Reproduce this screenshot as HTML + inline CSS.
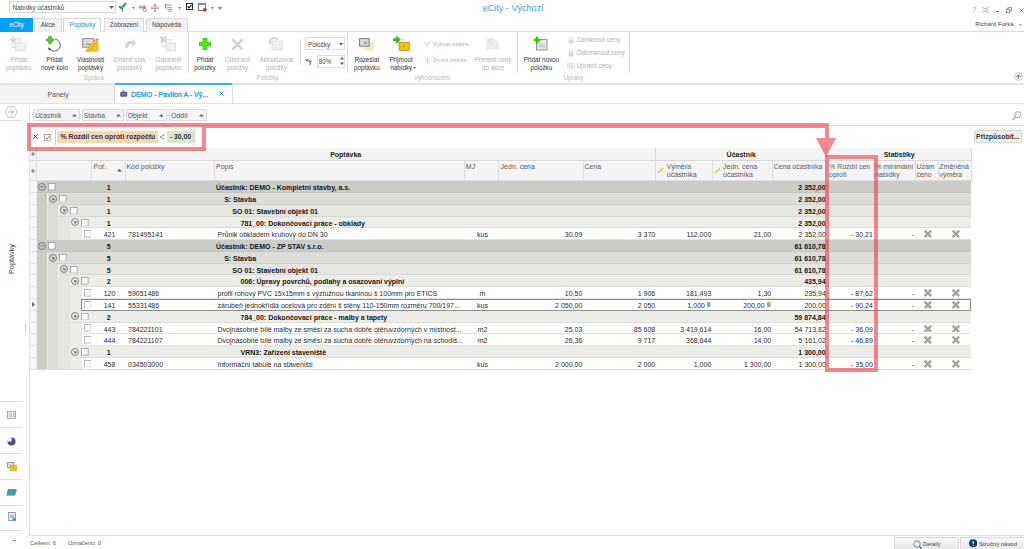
<!DOCTYPE html><html><head><meta charset="utf-8"><style>
html,body{margin:0;padding:0;width:1024px;height:549px;overflow:hidden;background:#fff;position:relative;font-family:"Liberation Sans",sans-serif}
body>div{position:absolute}
.t{position:absolute;white-space:nowrap;color:#333}
</style></head><body>
<div style="left:9.00px;top:1.20px;width:106.50px;height:12.30px;border:1px solid #d6d6d6;box-sizing:border-box;background:#fff"></div>
<div class="t" style="left:12.50px;top:4.04px;font-size:6.3px;line-height:7.56px;color:#444">Nabídky účastníků</div>
<svg style="position:absolute;left:109.00px;top:5.50px" width="5" height="3" viewBox="0 0 5 3"><path d="M0 0h5L2.5 3z" fill="#666"/></svg>
<svg style="position:absolute;left:117.50px;top:2.00px" width="9" height="10" viewBox="0 0 9 10"><path d="M4.5 4.5v5" stroke="#4a6a9a" stroke-width="1.2"/><path d="M1 4.2l2.4 2L8 1" stroke="#2faa2f" stroke-width="2" fill="none"/><path d="M1.5 4.5h6" stroke="#6c8cb8" stroke-width="0.8"/></svg>
<svg style="position:absolute;left:131.50px;top:6.50px" width="3" height="2" viewBox="0 0 3 2"><path d="M0 0h3L1.5 2z" fill="#777"/></svg>
<svg style="position:absolute;left:138.00px;top:3.00px" width="9" height="9" viewBox="0 0 9 9"><ellipse cx="2.5" cy="4" rx="2.2" ry="1.8" fill="#a8a8b0"/><ellipse cx="6" cy="4" rx="2.2" ry="1.8" fill="#8a8a98"/><path d="M0.5 3.5h8" stroke="#ddd" stroke-width="0.6"/><circle cx="6.8" cy="7" r="1.6" fill="#fff" stroke="#c65" stroke-width="0.8"/></svg>
<svg style="position:absolute;left:151.00px;top:2.50px" width="8" height="9" viewBox="0 0 8 9"><path d="M0 4h8M0 5.6h8" stroke="#777" stroke-width="0.7"/><path d="M4 3.2L2.6 1.2h2.8zM4 6.4L2.6 8.4h2.8z" fill="#d33"/></svg>
<svg style="position:absolute;left:164.50px;top:2.50px" width="7" height="9" viewBox="0 0 7 9"><path d="M0.5 0.5v4.5h2M0.5 2h6" stroke="#777" stroke-width="0.8" fill="none"/><path d="M2.5 4.5h4M2.5 6.5h4M2.5 8.2h4" stroke="#888" stroke-width="0.7"/><path d="M6 3.8v5" stroke="#d66" stroke-width="0.6"/></svg>
<svg style="position:absolute;left:178.00px;top:6.50px" width="3" height="2" viewBox="0 0 3 2"><path d="M0 0h3L1.5 2z" fill="#777"/></svg>
<svg style="position:absolute;left:185.50px;top:2.80px" width="7" height="7" viewBox="0 0 7 7"><rect x="0.5" y="0.5" width="6" height="6" fill="#fff" stroke="#222" stroke-width="1"/><path d="M1.7 3.5l1.4 1.4 2.4-3" stroke="#111" stroke-width="1.2" fill="none"/></svg>
<svg style="position:absolute;left:198.00px;top:2.50px" width="9" height="9" viewBox="0 0 9 9"><rect x="0.5" y="0.5" width="7" height="7" fill="#fff" stroke="#666" stroke-width="0.9"/><rect x="0.5" y="0.5" width="7" height="1.6" fill="#6aa0d8"/><circle cx="6.8" cy="6.8" r="1.9" fill="#c8332b"/></svg>
<svg style="position:absolute;left:210.50px;top:6.50px" width="3" height="2" viewBox="0 0 3 2"><path d="M0 0h3L1.5 2z" fill="#777"/></svg>
<svg style="position:absolute;left:217.50px;top:5.50px" width="4" height="4" viewBox="0 0 4 4"><path d="M0 0h4M0 1.5h4L2 3.5z" stroke="#888" stroke-width="0.6" fill="#888"/></svg>
<div class="t" style="left:482.60px;top:2.69px;font-size:9.1px;line-height:10.92px;color:#3a9fe0">eCity - Výchozí</div>
<div class="t" style="left:972.50px;top:5.85px;font-size:6.5px;line-height:7.80px;color:#888">?</div>
<svg style="position:absolute;left:982.00px;top:6.80px" width="7" height="6" viewBox="0 0 7 6"><path d="M0 1.5V0h1.5M5.5 0H7v1.5M7 4.5V6H5.5M1.5 6H0V4.5" stroke="#888" stroke-width="0.7" fill="none"/><rect x="2" y="1.8" width="3" height="2.4" stroke="#888" stroke-width="0.6" fill="none"/></svg>
<div style="left:995.50px;top:11.20px;width:3.60px;height:0.80px;background:#777"></div>
<svg style="position:absolute;left:1006.00px;top:7.00px" width="6" height="6" viewBox="0 0 6 6"><rect x="0.4" y="2.2" width="3.5" height="3.4" fill="none" stroke="#777" stroke-width="0.8"/><path d="M2 2.2V0.4h3.6v3.5H3.9" fill="none" stroke="#777" stroke-width="0.8"/></svg>
<svg style="position:absolute;left:1019.00px;top:7.50px" width="5" height="5" viewBox="0 0 5 5"><path d="M0.5 0.5l4 4M4.5 0.5l-4 4" stroke="#777" stroke-width="0.8"/></svg>
<div class="t" style="left:975.30px;top:20.43px;font-size:6.1px;line-height:7.32px;color:#444">Richard Furka</div>
<svg style="position:absolute;left:1019.00px;top:24.00px" width="3" height="2" viewBox="0 0 3 2"><path d="M0 0h3L1.5 2z" fill="#999"/></svg>
<div style="left:0.00px;top:31.00px;width:1024.00px;height:1.20px;background:#dcdcdc"></div>
<div style="left:0.00px;top:17.80px;width:33.00px;height:14.10px;background:#02a2fc"></div>
<div class="t" style="left:9.40px;top:21.08px;font-size:6.36px;line-height:7.63px;color:#fff">eCity</div>
<div style="left:33.90px;top:17.80px;width:28.10px;height:13.90px;background:#f2f2f2;border:1px solid #d9d9d9;border-bottom:none;box-sizing:border-box"></div>
<div class="t" style="left:40.80px;top:21.08px;font-size:6.36px;line-height:7.63px;color:#444">Akce</div>
<div style="left:103.50px;top:17.80px;width:40.90px;height:13.90px;background:#f2f2f2;border:1px solid #d9d9d9;border-bottom:none;box-sizing:border-box"></div>
<div class="t" style="left:109.75px;top:21.08px;font-size:6.36px;line-height:7.63px;color:#444">Zobrazení</div>
<div style="left:146.00px;top:17.80px;width:42.00px;height:13.90px;background:#f2f2f2;border:1px solid #d9d9d9;border-bottom:none;box-sizing:border-box"></div>
<div class="t" style="left:152.00px;top:21.08px;font-size:6.36px;line-height:7.63px;color:#444">Nápověda</div>
<div style="left:62.80px;top:17.80px;width:38.50px;height:14.60px;background:#fff;border:1px solid #d6d6d6;border-bottom:none;box-sizing:border-box"></div>
<div class="t" style="left:69.40px;top:21.08px;font-size:6.36px;line-height:7.63px;color:#2b92da">Poptávky</div>
<div style="left:0.00px;top:82.80px;width:1024.00px;height:2.30px;background:#e3e3df"></div>
<div style="left:187.50px;top:32.00px;width:0.90px;height:40.50px;background:#dedede"></div>
<div style="left:347.30px;top:32.00px;width:0.90px;height:40.50px;background:#dedede"></div>
<div style="left:516.90px;top:32.00px;width:0.90px;height:40.50px;background:#dedede"></div>
<div style="left:629.40px;top:32.00px;width:0.90px;height:40.50px;background:#dedede"></div>
<div style="left:300.00px;top:38.60px;width:0.90px;height:26.70px;background:#dedede"></div>
<div class="t" style="left:-21.25px;width:80.00px;top:55.84px;font-size:6.3px;line-height:7.56px;text-align:center;color:#b3b3b3">Přidat</div>
<div class="t" style="left:-21.25px;width:80.00px;top:63.94px;font-size:6.3px;line-height:7.56px;text-align:center;color:#b3b3b3">poptávku</div>
<div class="t" style="left:14.50px;width:80.00px;top:55.84px;font-size:6.3px;line-height:7.56px;text-align:center;color:#333">Přidat</div>
<div class="t" style="left:14.50px;width:80.00px;top:63.94px;font-size:6.3px;line-height:7.56px;text-align:center;color:#333">nové kolo</div>
<div class="t" style="left:50.50px;width:80.00px;top:55.84px;font-size:6.3px;line-height:7.56px;text-align:center;color:#333">Vlastnosti</div>
<div class="t" style="left:50.50px;width:80.00px;top:63.94px;font-size:6.3px;line-height:7.56px;text-align:center;color:#333">poptávky</div>
<div class="t" style="left:89.60px;width:80.00px;top:55.84px;font-size:6.3px;line-height:7.56px;text-align:center;color:#b3b3b3">Změnit stav</div>
<div class="t" style="left:89.60px;width:80.00px;top:63.94px;font-size:6.3px;line-height:7.56px;text-align:center;color:#b3b3b3">poptávky</div>
<div class="t" style="left:128.40px;width:80.00px;top:55.84px;font-size:6.3px;line-height:7.56px;text-align:center;color:#b3b3b3">Odstranit</div>
<div class="t" style="left:128.40px;width:80.00px;top:63.94px;font-size:6.3px;line-height:7.56px;text-align:center;color:#b3b3b3">poptávku</div>
<div class="t" style="left:165.00px;width:80.00px;top:55.84px;font-size:6.3px;line-height:7.56px;text-align:center;color:#333">Přidat</div>
<div class="t" style="left:165.00px;width:80.00px;top:63.94px;font-size:6.3px;line-height:7.56px;text-align:center;color:#333">položky</div>
<div class="t" style="left:197.60px;width:80.00px;top:55.84px;font-size:6.3px;line-height:7.56px;text-align:center;color:#b3b3b3">Odstranit</div>
<div class="t" style="left:197.60px;width:80.00px;top:63.94px;font-size:6.3px;line-height:7.56px;text-align:center;color:#b3b3b3">položky</div>
<div class="t" style="left:236.50px;width:80.00px;top:55.84px;font-size:6.3px;line-height:7.56px;text-align:center;color:#b3b3b3">Aktualizovat</div>
<div class="t" style="left:236.50px;width:80.00px;top:63.94px;font-size:6.3px;line-height:7.56px;text-align:center;color:#b3b3b3">položky</div>
<div class="t" style="left:326.90px;width:80.00px;top:55.84px;font-size:6.3px;line-height:7.56px;text-align:center;color:#333">Rozeslat</div>
<div class="t" style="left:326.90px;width:80.00px;top:63.94px;font-size:6.3px;line-height:7.56px;text-align:center;color:#333">poptávku</div>
<div class="t" style="left:361.20px;width:80.00px;top:55.84px;font-size:6.3px;line-height:7.56px;text-align:center;color:#333">Přijmout</div>
<div class="t" style="left:361.20px;width:80.00px;top:63.94px;font-size:6.3px;line-height:7.56px;text-align:center;color:#333">nabídky</div>
<svg style="position:absolute;left:413.00px;top:67.30px" width="3" height="2" viewBox="0 0 3 2"><path d="M0 0h3L1.5 2z" fill="#666"/></svg>
<div class="t" style="left:453.00px;width:80.00px;top:55.84px;font-size:6.3px;line-height:7.56px;text-align:center;color:#b3b3b3">Přenést ceny</div>
<div class="t" style="left:453.00px;width:80.00px;top:63.94px;font-size:6.3px;line-height:7.56px;text-align:center;color:#b3b3b3">do akce</div>
<div class="t" style="left:501.40px;width:80.00px;top:55.84px;font-size:6.3px;line-height:7.56px;text-align:center;color:#333">Přidat novou</div>
<div class="t" style="left:501.40px;width:80.00px;top:63.94px;font-size:6.3px;line-height:7.56px;text-align:center;color:#333">položku</div>
<div class="t" style="left:53.75px;width:80.00px;top:73.64px;font-size:6.3px;line-height:7.56px;text-align:center;color:#bababa">Správa</div>
<div class="t" style="left:227.50px;width:80.00px;top:73.64px;font-size:6.3px;line-height:7.56px;text-align:center;color:#bababa">Položky</div>
<div class="t" style="left:392.00px;width:80.00px;top:73.64px;font-size:6.3px;line-height:7.56px;text-align:center;color:#bababa">Vyhodnocení</div>
<div class="t" style="left:533.50px;width:80.00px;top:73.64px;font-size:6.3px;line-height:7.56px;text-align:center;color:#bababa">Úpravy</div>
<div class="t" style="left:432.75px;top:40.43px;font-size:6.2px;line-height:7.44px;color:#b3b3b3">Vybrat vítěze</div>
<div class="t" style="left:432.75px;top:56.43px;font-size:6.2px;line-height:7.44px;color:#b3b3b3">Zrušit vítěze</div>
<div class="t" style="left:576.50px;top:35.54px;font-size:6.4px;line-height:7.68px;color:#b3b3b3">Zamknout ceny</div>
<div class="t" style="left:576.50px;top:48.54px;font-size:6.4px;line-height:7.68px;color:#b3b3b3">Odemknout ceny</div>
<div class="t" style="left:576.50px;top:61.54px;font-size:6.4px;line-height:7.68px;color:#b3b3b3">Upravit ceny</div>
<div style="left:304.70px;top:37.20px;width:40.30px;height:13.10px;border:1px solid #dcdcdc;box-sizing:border-box;background:#fff"></div>
<div class="t" style="left:308.00px;top:40.64px;font-size:6.3px;line-height:7.56px;color:#444">Položky</div>
<svg style="position:absolute;left:339.00px;top:43.00px" width="4" height="2.5" viewBox="0 0 4 2.5"><path d="M0 0h4L2 2.5z" fill="#555"/></svg>
<div style="left:317.40px;top:54.50px;width:27.20px;height:13.10px;border:1px solid #dcdcdc;box-sizing:border-box;background:#fff"></div>
<div class="t" style="left:318.80px;top:57.64px;font-size:6.3px;line-height:7.56px;color:#444">80%</div>
<svg style="position:absolute;left:339.50px;top:57.00px" width="4" height="8" viewBox="0 0 4 8"><path d="M0 2.5h4L2 0zM0 5.5h4L2 8z" fill="#555"/></svg>
<svg style="position:absolute;left:304.50px;top:57.50px" width="7" height="7" viewBox="0 0 7 7"><path d="M0.5 1l1.5 2 1.5-2M4 2l1 2v3M4.5 3.5h2" stroke="#3a66b8" stroke-width="1.1" fill="none"/></svg>
<svg style="position:absolute;left:10.00px;top:35.50px" width="16" height="16" viewBox="0 0 16 16"><rect x="2" y="2.5" width="9" height="9" fill="#f4f4f4" stroke="#ddd" stroke-width="0.8"/><rect x="5.5" y="7" width="10" height="8" fill="#f0f0f0" stroke="#ddd" stroke-width="0.8"/><path d="M3 0.5v6M0 3.5h6" stroke="#d8d8d8" stroke-width="2.2"/></svg>
<svg style="position:absolute;left:45.50px;top:35.50px" width="16" height="16" viewBox="0 0 16 16"><path d="M9 3.2A6 6 0 1 1 3.2 12.5" stroke="#444" stroke-width="0.9" fill="none"/><path d="M2.2 11.2l0.6 3.2 3-1.2z" fill="#444"/><path d="M4 0.3v7.4M0.3 4h7.4" stroke="#2a9e12" stroke-width="3.2"/><path d="M4 0.9v6.2M0.9 4h6.2" stroke="#43d81a" stroke-width="2.2"/></svg>
<svg style="position:absolute;left:82.00px;top:36.50px" width="17" height="15" viewBox="0 0 17 15"><rect x="0.8" y="1.6" width="11" height="8.6" fill="#dcdcdc" stroke="#8a8a8a" stroke-width="1"/><path d="M4 7.2h4.5" stroke="#777" stroke-width="1"/><path d="M4.8 14.2H16.2V5.2z" fill="#f4c414" stroke="#c9a000" stroke-width="0.5"/><path d="M3.8 13.8L13.6 2.6 15.6 4.4 5.8 15z" fill="#f7cb1c" stroke="#a88400" stroke-width="0.6"/><path d="M13.8 2.4l1.2-1.5 1.8 1.6-1.2 1.5z" fill="#e77"/></svg>
<svg style="position:absolute;left:124.00px;top:38.00px" width="13" height="12" viewBox="0 0 13 12"><path d="M2 11A5 5 0 0 1 8 3.5V1l4.5 4L8 9V6.5A3 3 0 0 0 4 9.5z" fill="#d5d5d5"/></svg>
<svg style="position:absolute;left:160.00px;top:35.50px" width="16" height="16" viewBox="0 0 16 16"><rect x="2" y="3.5" width="9" height="7.5" fill="#f4f4f4" stroke="#ddd" stroke-width="0.8"/><rect x="6" y="7" width="9.5" height="8" fill="#f0f0f0" stroke="#ddd" stroke-width="0.8"/><path d="M0.5 0.8l6 5.5M6.5 0.8l-6 5.5" stroke="#d2d2d2" stroke-width="2.2"/></svg>
<svg style="position:absolute;left:197.50px;top:36.50px" width="14" height="14" viewBox="0 0 14 14"><path d="M7 1v12M1 7h12" stroke="#2fbf10" stroke-width="4.6"/><path d="M7 1.5v11M1.5 7h11" stroke="#4fe61a" stroke-width="3.4"/></svg>
<svg style="position:absolute;left:230.50px;top:37.50px" width="13" height="13" viewBox="0 0 13 13"><path d="M1.5 1.5l10 10M11.5 1.5l-10 10" stroke="#d4d4d4" stroke-width="2.8"/></svg>
<svg style="position:absolute;left:268.50px;top:37.00px" width="14" height="14" viewBox="0 0 14 14"><rect x="3" y="4" width="10" height="9" fill="#f0f0f0" stroke="#ddd" stroke-width="0.8"/><path d="M1.5 7A4 4 0 0 1 8.5 3" stroke="#d6d6d6" stroke-width="2.4" fill="none"/></svg>
<svg style="position:absolute;left:359.00px;top:38.00px" width="16" height="13" viewBox="0 0 16 13"><rect x="5" y="4" width="10" height="8.5" fill="#f8e6cc"/><rect x="0.6" y="0.6" width="9.5" height="7.5" fill="#ddd" stroke="#777" stroke-width="1"/><path d="M4.5 4h4M4.5 5.5h4" stroke="#777" stroke-width="0.6"/></svg>
<svg style="position:absolute;left:393.00px;top:36.00px" width="17" height="15" viewBox="0 0 17 15"><rect x="5" y="3" width="6" height="6" fill="#eee" stroke="#ccc" stroke-width="0.5"/><rect x="6.2" y="6.5" width="10.3" height="8" fill="#f5c20e" stroke="#c98e00" stroke-width="0.8"/><path d="M10 10.5h2" stroke="#8a6000" stroke-width="0.6"/><path d="M0.5 2.6h3V0l3.8 3.8-3.8 3.8V5h-3z" fill="#28c01e" stroke="#1a8a14" stroke-width="0.4"/></svg>
<svg style="position:absolute;left:423.50px;top:41.00px" width="7" height="7" viewBox="0 0 7 7"><path d="M0.5 0.5l2.5 3v3M6.5 0.5l-3 3" stroke="#d4d4d4" stroke-width="1.1" fill="none"/></svg>
<svg style="position:absolute;left:423.50px;top:57.00px" width="7" height="7" viewBox="0 0 7 7"><path d="M0.5 0.5l6 6M6.5 0.5l-6 6M3.5 0v7" stroke="#d9d9d9" stroke-width="1" fill="none"/></svg>
<svg style="position:absolute;left:485.00px;top:36.00px" width="14" height="14" viewBox="0 0 14 14"><path d="M1.5 13V7L7.5 1.5 13.5 7v6z" fill="#ececec" stroke="#e0e0e0" stroke-width="0.6"/><path d="M0.5 3.5h3V1.5l3 2.5-3 2.5V5h-3z" fill="#dedede"/></svg>
<svg style="position:absolute;left:533.00px;top:36.00px" width="15" height="15" viewBox="0 0 15 15"><rect x="3.5" y="3.5" width="10.5" height="10.5" fill="#e6e6e6" stroke="#888" stroke-width="0.9"/><path d="M6 9h6M6 11h6" stroke="#bbb" stroke-width="0.8"/><path d="M4 0.5v7M0.5 4h7" stroke="#34cc12" stroke-width="2.6"/></svg>
<svg style="position:absolute;left:568.00px;top:37.00px" width="6" height="7" viewBox="0 0 6 7"><rect x="0.5" y="3" width="5" height="3.5" fill="#dadada"/><path d="M1.5 3V2a1.5 1.5 0 0 1 3 0v1" stroke="#d5d5d5" stroke-width="0.9" fill="none"/></svg>
<svg style="position:absolute;left:568.00px;top:50.00px" width="6" height="7" viewBox="0 0 6 7"><rect x="0.5" y="3" width="5" height="3.5" fill="#dadada"/><path d="M1.5 3V2a1.5 1.5 0 0 1 3 0v1" stroke="#d5d5d5" stroke-width="0.9" fill="none"/></svg>
<svg style="position:absolute;left:567.00px;top:63.00px" width="8" height="6" viewBox="0 0 8 6"><rect x="0.5" y="0.5" width="7" height="5" fill="#eee" stroke="#ddd" stroke-width="0.8"/><path d="M2 3h4" stroke="#d0d0d0"/></svg>
<svg style="position:absolute;left:1014.00px;top:72.00px" width="9" height="9" viewBox="0 0 9 9"><circle cx="4.5" cy="4.5" r="4" fill="#f2f2f2" stroke="#bbb" stroke-width="0.6"/><path d="M2.5 5l2-2 2 2M4.5 3v3.5" stroke="#555" stroke-width="0.8" fill="none"/></svg>
<div style="left:0.00px;top:85.00px;width:115.30px;height:17.60px;background:#f3f3f3;border-right:1px solid #d8d8d8;box-sizing:border-box"></div>
<div class="t" style="left:28.00px;width:60.00px;top:91.22px;font-size:6.95px;line-height:8.34px;text-align:center;color:#555">Panely</div>
<div style="left:115.30px;top:83.10px;width:116.60px;height:1.80px;background:#40acee"></div>
<div style="left:231.50px;top:85.00px;width:0.90px;height:18.50px;background:#dedede"></div>
<div style="left:0.00px;top:102.60px;width:1024.00px;height:1.90px;background:#e3e3df"></div>
<svg style="position:absolute;left:120.00px;top:89.80px" width="7.5" height="7" viewBox="0 0 7.5 7"><path d="M2.6 2V0.9h2.3V2" stroke="#5b5b95" stroke-width="0.9" fill="none"/><rect x="0.2" y="1.9" width="7.1" height="4.9" rx="1" fill="#5b5b95"/><rect x="2" y="3.6" width="3.5" height="1.2" fill="#8c8cbc"/></svg>
<div class="t" style="left:131.00px;top:91.08px;font-size:7.1px;line-height:8.52px;color:#2c9ce2;-webkit-text-stroke:0.3px #2c9ce2">DEMO - Pavilon A - Vý...</div>
<svg style="position:absolute;left:218.50px;top:90.50px" width="5" height="5" viewBox="0 0 5 5"><path d="M0.5 0.5l4 4M4.5 0.5l-4 4" stroke="#2a98e0" stroke-width="1"/></svg>
<svg style="position:absolute;left:5.00px;top:105.60px" width="12" height="12" viewBox="0 0 12 12"><circle cx="6" cy="6" r="5.5" fill="none" stroke="#bdbdbd" stroke-width="0.9"/><path d="M2.8 6h6M6.2 3.3L8.9 6 6.2 8.7" stroke="#aaa" stroke-width="0.9" fill="none"/></svg>
<div style="left:0.00px;top:119.70px;width:22.40px;height:0.90px;background:#dcdcdc"></div>
<div style="left:25.40px;top:323.00px;width:0.80px;height:7.60px;background:#c8c8c8"></div>
<div class="t" style="left:12px;top:259px;font-size:7.3px;line-height:8px;color:#445;transform:translate(-50%,-50%) rotate(-90deg)">Poptávky</div>
<div style="left:0.00px;top:401.20px;width:22.40px;height:0.90px;background:#dcdcdc"></div>
<div style="left:0.00px;top:427.30px;width:22.40px;height:0.90px;background:#dcdcdc"></div>
<div style="left:0.00px;top:453.00px;width:22.40px;height:0.90px;background:#dcdcdc"></div>
<div style="left:0.00px;top:479.30px;width:22.40px;height:0.90px;background:#dcdcdc"></div>
<div style="left:0.00px;top:504.70px;width:22.40px;height:0.90px;background:#dcdcdc"></div>
<div style="left:0.00px;top:530.30px;width:22.40px;height:0.90px;background:#dcdcdc"></div>
<svg style="position:absolute;left:7.00px;top:411.00px" width="9" height="8" viewBox="0 0 9 8"><rect x="0.5" y="0.5" width="8" height="7" fill="#eee" stroke="#999" stroke-width="0.8"/><path d="M2 3h3M2 5h3" stroke="#999" stroke-width="0.8"/><rect x="6" y="2" width="1.5" height="4" fill="#bbb"/></svg>
<svg style="position:absolute;left:7.00px;top:437.00px" width="9" height="9" viewBox="0 0 9 9"><circle cx="4.5" cy="4.5" r="4" fill="#4a4f8a"/><path d="M4.5 4.5V0.5A4 4 0 0 0 0.5 4.5z" fill="#fff"/></svg>
<svg style="position:absolute;left:7.00px;top:462.00px" width="10" height="9" viewBox="0 0 10 9"><rect x="0.5" y="0.5" width="6.5" height="5" fill="#ddd" stroke="#888" stroke-width="0.8"/><rect x="3.5" y="3.5" width="6" height="5" fill="#f2c20f" stroke="#c90" stroke-width="0.6"/></svg>
<svg style="position:absolute;left:6.00px;top:488.00px" width="11" height="8" viewBox="0 0 11 8"><path d="M2 1h8.5L9 6.5H0.5z" fill="#3d9ba6"/><path d="M0.5 6.5h8.5L10.5 1V3L9 7.5H0.5z" fill="#2a6c78"/></svg>
<svg style="position:absolute;left:7.50px;top:512.00px" width="8" height="9" viewBox="0 0 8 9"><rect x="0.5" y="0.5" width="7" height="8" fill="#f0f0f0" stroke="#888" stroke-width="0.8"/><rect x="2" y="2.5" width="4" height="3.5" fill="#bbb"/><rect x="4.5" y="6" width="3" height="2.5" fill="#4a8ad0"/></svg>
<svg style="position:absolute;left:12.50px;top:540.00px" width="3" height="2" viewBox="0 0 3 2"><path d="M0 0h3L1.5 2z" fill="#777"/></svg>
<div style="left:29.20px;top:104.50px;width:0.90px;height:431.00px;background:#e0e0dc"></div>
<div style="left:29.20px;top:535.00px;width:994.80px;height:1.10px;background:#e0e0dc"></div>
<div style="left:30.00px;top:125.20px;width:994.00px;height:0.90px;background:#dcdcdc"></div>
<div style="left:33.10px;top:109.10px;width:46.60px;height:12.10px;background:#f4f4f4;border:1px solid #d9d9d9;box-sizing:border-box"></div>
<div class="t" style="left:34.90px;top:111.56px;font-size:6.8px;line-height:8.16px;color:#555">Účastník</div>
<svg style="position:absolute;left:71.50px;top:114.30px" width="5" height="2.6" viewBox="0 0 5 2.6"><path d="M0 2.6h5L2.5 0z" fill="#666"/></svg>
<div style="left:79.70px;top:115.20px;width:2.30px;height:0.70px;background:#ccc"></div>
<div style="left:82.00px;top:109.10px;width:41.75px;height:12.10px;background:#f4f4f4;border:1px solid #d9d9d9;box-sizing:border-box"></div>
<div class="t" style="left:83.80px;top:111.56px;font-size:6.8px;line-height:8.16px;color:#555">Stavba</div>
<svg style="position:absolute;left:115.55px;top:114.30px" width="5" height="2.6" viewBox="0 0 5 2.6"><path d="M0 2.6h5L2.5 0z" fill="#666"/></svg>
<div style="left:123.75px;top:115.20px;width:2.25px;height:0.70px;background:#ccc"></div>
<div style="left:126.00px;top:109.10px;width:40.90px;height:12.10px;background:#f4f4f4;border:1px solid #d9d9d9;box-sizing:border-box"></div>
<div class="t" style="left:127.80px;top:111.56px;font-size:6.8px;line-height:8.16px;color:#555">Objekt</div>
<svg style="position:absolute;left:158.70px;top:114.30px" width="5" height="2.6" viewBox="0 0 5 2.6"><path d="M0 2.6h5L2.5 0z" fill="#666"/></svg>
<div style="left:166.90px;top:115.20px;width:2.50px;height:0.70px;background:#ccc"></div>
<div style="left:169.40px;top:109.10px;width:37.50px;height:12.10px;background:#f4f4f4;border:1px solid #d9d9d9;box-sizing:border-box"></div>
<div class="t" style="left:171.20px;top:111.56px;font-size:6.8px;line-height:8.16px;color:#555">Oddíl</div>
<svg style="position:absolute;left:198.70px;top:114.30px" width="5" height="2.6" viewBox="0 0 5 2.6"><path d="M0 2.6h5L2.5 0z" fill="#666"/></svg>
<svg style="position:absolute;left:1012.00px;top:110.50px" width="9.5" height="9.5" viewBox="0 0 9.5 9.5"><circle cx="5.8" cy="3.7" r="3.1" fill="none" stroke="#999" stroke-width="0.9"/><path d="M3.6 5.9L0.6 8.9" stroke="#999" stroke-width="1.1"/></svg>
<div style="left:973.50px;top:130.40px;width:48.10px;height:13.10px;background:#efefef;border:1px solid #d6d6d6;border-radius:1px;box-sizing:border-box"></div>
<div class="t" style="left:976.00px;top:133.20px;font-size:6.97px;line-height:8.36px;font-weight:bold;color:#333">Přizpůsobit...</div>
<svg style="position:absolute;left:33.00px;top:134.40px" width="5" height="5" viewBox="0 0 5 5"><path d="M0.4 0.4l4.2 4.2M4.6 0.4L0.4 4.6" stroke="#444" stroke-width="1"/></svg>
<svg style="position:absolute;left:44.00px;top:133.60px" width="7.3" height="7.3" viewBox="0 0 7.3 7.3"><rect x="0.5" y="0.5" width="6.3" height="6.3" fill="#fff" stroke="#999" stroke-width="0.9"/><path d="M1.8 3.8l1.3 1.4 2.7-3.6" stroke="#555" stroke-width="0.8" fill="none"/></svg>
<svg style="position:absolute;left:55.00px;top:129.00px" width="2" height="16" viewBox="0 0 2 16"><path d="M1.8 0.4H0.5v15.2h1.3" stroke="#bbb" stroke-width="0.7" fill="none"/></svg>
<div style="left:57.30px;top:130.80px;width:100.80px;height:12.20px;background:#f7d6b3"></div>
<div class="t" style="left:60.40px;top:133.17px;font-size:6.9px;line-height:8.28px;font-weight:bold;color:#333">% Rozdíl cen oproti rozpočtu</div>
<div class="t" style="left:159.60px;top:131.89px;font-size:9.2px;line-height:11.04px;color:#7a7a7a">&lt;</div>
<div style="left:167.00px;top:130.80px;width:26.50px;height:12.20px;background:#d7e6d1"></div>
<div class="t" style="left:169.70px;top:133.17px;font-size:6.9px;line-height:8.28px;font-weight:bold;color:#333">- 30,00</div>
<svg style="position:absolute;left:193.30px;top:129.00px" width="2" height="16" viewBox="0 0 2 16"><path d="M0 0.4h1.3v15.2H0" stroke="#bbb" stroke-width="0.7" fill="none"/></svg>
<div class="t" style="left:30.00px;top:540.06px;font-size:5.75px;line-height:6.90px;color:#555">Celkem: 6</div>
<div class="t" style="left:68.00px;top:540.01px;font-size:5.8px;line-height:6.96px;color:#555">Označeno: 0</div>
<div style="left:894.00px;top:537.40px;width:65.00px;height:11.60px;background:linear-gradient(#f8f8f8,#e8e8e8);border:1px solid #d8d8d8;border-bottom:none;box-sizing:border-box"></div>
<div style="left:960.40px;top:537.40px;width:63.60px;height:11.60px;background:linear-gradient(#f8f8f8,#e8e8e8);border:1px solid #d8d8d8;border-right:none;border-bottom:none;box-sizing:border-box"></div>
<svg style="position:absolute;left:912.50px;top:539.50px" width="9" height="9" viewBox="0 0 9 9"><circle cx="4" cy="4" r="3.2" fill="#eef4fa" stroke="#6a7a8a" stroke-width="0.9"/><path d="M6.3 6.3L8.5 8.5" stroke="#555" stroke-width="1.2"/></svg>
<div class="t" style="left:923.00px;top:540.76px;font-size:5.75px;line-height:6.90px;color:#444">Detaily</div>
<svg style="position:absolute;left:968.50px;top:539.00px" width="8.5" height="8.5" viewBox="0 0 8.5 8.5"><circle cx="4.25" cy="4.25" r="4.1" fill="#0b3768"/><path d="M4.25 2v3" stroke="#fff" stroke-width="1.1"/><circle cx="4.25" cy="6.4" r="0.6" fill="#fff"/></svg>
<div class="t" style="left:979.00px;top:540.57px;font-size:5.95px;line-height:7.14px;color:#444">Stručný návod</div>
<div style="left:30.00px;top:147.60px;width:941.50px;height:33.40px;background:#f4f4f4"></div>
<div style="left:36.20px;top:160.10px;width:935.30px;height:0.80px;background:#d9d9d9"></div>
<div style="left:30.00px;top:180.20px;width:941.50px;height:0.80px;background:#dddddd"></div>
<div style="left:970.70px;top:147.60px;width:0.80px;height:33.40px;background:#d9d9d9"></div>
<div style="left:36.00px;top:147.60px;width:0.80px;height:33.40px;background:#dcdcdc"></div>
<div style="left:30.00px;top:160.10px;width:6.20px;height:0.80px;background:#dcdcdc"></div>
<svg style="position:absolute;left:30.70px;top:152.30px" width="4" height="4" viewBox="0 0 4 4"><circle cx="2" cy="2" r="1.7" fill="#8c8c8c"/></svg>
<svg style="position:absolute;left:30.70px;top:168.60px" width="4" height="4" viewBox="0 0 4 4"><circle cx="2" cy="2" r="1.7" fill="#8c8c8c"/></svg>
<div style="left:655.10px;top:147.60px;width:0.80px;height:33.40px;background:#d9d9d9"></div>
<div style="left:826.40px;top:147.60px;width:0.80px;height:33.40px;background:#d9d9d9"></div>
<div style="left:91.30px;top:160.30px;width:0.80px;height:20.70px;background:#dcdcdc"></div>
<div style="left:124.90px;top:160.30px;width:0.80px;height:20.70px;background:#dcdcdc"></div>
<div style="left:214.00px;top:160.30px;width:0.80px;height:20.70px;background:#dcdcdc"></div>
<div style="left:463.90px;top:160.30px;width:0.80px;height:20.70px;background:#dcdcdc"></div>
<div style="left:498.00px;top:160.30px;width:0.80px;height:20.70px;background:#dcdcdc"></div>
<div style="left:582.50px;top:160.30px;width:0.80px;height:20.70px;background:#dcdcdc"></div>
<div style="left:711.90px;top:160.30px;width:0.80px;height:20.70px;background:#dcdcdc"></div>
<div style="left:771.60px;top:160.30px;width:0.80px;height:20.70px;background:#dcdcdc"></div>
<div style="left:874.00px;top:160.30px;width:0.80px;height:20.70px;background:#dcdcdc"></div>
<div style="left:914.60px;top:160.30px;width:0.80px;height:20.70px;background:#dcdcdc"></div>
<div style="left:937.60px;top:160.30px;width:0.80px;height:20.70px;background:#dcdcdc"></div>
<div class="t" style="left:285.70px;width:120.00px;top:150.87px;font-size:7.0px;line-height:8.40px;text-align:center;font-weight:bold;color:#222">Poptávka</div>
<div class="t" style="left:681.20px;width:120.00px;top:150.87px;font-size:7.0px;line-height:8.40px;text-align:center;font-weight:bold;color:#222">Účastník</div>
<div class="t" style="left:839.20px;width:120.00px;top:150.87px;font-size:7.0px;line-height:8.40px;text-align:center;font-weight:bold;color:#222">Statistiky</div>
<div class="t" style="left:93.50px;top:163.07px;font-size:7.0px;line-height:8.40px;color:#5a5a5a">Poř.</div>
<svg style="position:absolute;left:117.30px;top:169.30px" width="5" height="2.6" viewBox="0 0 5 2.6"><path d="M0 2.6h5L2.5 0z" fill="#555"/></svg>
<div class="t" style="left:126.40px;top:163.07px;font-size:7.0px;line-height:8.40px;color:#5a5a5a">Kód položky</div>
<div class="t" style="left:216.00px;top:163.07px;font-size:7.0px;line-height:8.40px;color:#5a5a5a">Popis</div>
<div class="t" style="left:465.80px;top:163.07px;font-size:7.0px;line-height:8.40px;color:#5a5a5a">MJ</div>
<div class="t" style="left:500.60px;top:163.07px;font-size:7.0px;line-height:8.40px;color:#5a5a5a">Jedn. cena</div>
<div class="t" style="left:584.50px;top:163.07px;font-size:7.0px;line-height:8.40px;color:#5a5a5a">Cena</div>
<svg style="position:absolute;left:658.20px;top:166.80px" width="6" height="6" viewBox="0 0 6 6"><path d="M0.6 5.4L5.2 0.8" stroke="#e6b400" stroke-width="1.2"/><path d="M0.3 5.7l0.9-0.3-0.6-0.6z" fill="#555"/></svg>
<div class="t" style="left:666.80px;top:163.07px;font-size:7.0px;line-height:8.40px;color:#5a5a5a">Výměra</div>
<div class="t" style="left:666.80px;top:171.37px;font-size:7.0px;line-height:8.40px;color:#5a5a5a">účastníka</div>
<svg style="position:absolute;left:714.50px;top:166.80px" width="6" height="6" viewBox="0 0 6 6"><path d="M0.6 5.4L5.2 0.8" stroke="#e6b400" stroke-width="1.2"/><path d="M0.3 5.7l0.9-0.3-0.6-0.6z" fill="#555"/></svg>
<div class="t" style="left:723.00px;top:163.07px;font-size:7.0px;line-height:8.40px;color:#5a5a5a">Jedn. cena</div>
<div class="t" style="left:723.00px;top:171.37px;font-size:7.0px;line-height:8.40px;color:#5a5a5a">účastníka</div>
<div class="t" style="left:773.70px;top:163.07px;font-size:7.0px;line-height:8.40px;color:#5a5a5a">Cena účastníka</div>
<div class="t" style="left:829.00px;top:163.07px;font-size:7.0px;line-height:8.40px;color:#5a5a5a">% Rozdíl cen</div>
<div class="t" style="left:829.00px;top:171.37px;font-size:7.0px;line-height:8.40px;color:#5a5a5a">oproti</div>
<div class="t" style="left:875.20px;top:163.07px;font-size:7.0px;line-height:8.40px;color:#5a5a5a">% minimální</div>
<div class="t" style="left:875.20px;top:171.37px;font-size:7.0px;line-height:8.40px;color:#5a5a5a">nabídky</div>
<div class="t" style="left:916.40px;top:163.07px;font-size:7.0px;line-height:8.40px;color:#5a5a5a">Uzam</div>
<div class="t" style="left:916.40px;top:171.37px;font-size:7.0px;line-height:8.40px;color:#5a5a5a">čeno</div>
<div class="t" style="left:939.30px;top:163.07px;font-size:7.0px;line-height:8.40px;color:#5a5a5a">Změněná</div>
<div class="t" style="left:939.30px;top:171.37px;font-size:7.0px;line-height:8.40px;color:#5a5a5a">výměra</div>
<div style="left:36.20px;top:192.98px;width:11.33px;height:47.12px;background:#cbccc7;border-left:0.6px solid #e9e9e6;box-sizing:border-box"></div>
<div style="left:36.20px;top:251.88px;width:11.33px;height:117.80px;background:#cbccc7;border-left:0.6px solid #e9e9e6;box-sizing:border-box"></div>
<div style="left:47.33px;top:204.76px;width:11.33px;height:35.34px;background:#dcddd8;border-left:0.6px solid #e9e9e6;box-sizing:border-box"></div>
<div style="left:47.33px;top:263.66px;width:11.33px;height:106.02px;background:#dcddd8;border-left:0.6px solid #e9e9e6;box-sizing:border-box"></div>
<div style="left:58.46px;top:216.54px;width:11.33px;height:23.56px;background:#e5e6e1;border-left:0.6px solid #e9e9e6;box-sizing:border-box"></div>
<div style="left:58.46px;top:275.44px;width:11.33px;height:94.24px;background:#e5e6e1;border-left:0.6px solid #e9e9e6;box-sizing:border-box"></div>
<div style="left:69.59px;top:228.32px;width:11.33px;height:11.78px;background:#ecede9;border-left:0.6px solid #e9e9e6;box-sizing:border-box"></div>
<div style="left:69.59px;top:287.22px;width:11.33px;height:23.56px;background:#ecede9;border-left:0.6px solid #e9e9e6;box-sizing:border-box"></div>
<div style="left:69.59px;top:322.56px;width:11.33px;height:23.56px;background:#ecede9;border-left:0.6px solid #e9e9e6;box-sizing:border-box"></div>
<div style="left:69.59px;top:357.90px;width:11.33px;height:11.78px;background:#ecede9;border-left:0.6px solid #e9e9e6;box-sizing:border-box"></div>
<div style="left:30.00px;top:181.20px;width:6.20px;height:11.78px;background:#f7f7f7;border-bottom:0.8px solid #e4e4e4;box-sizing:border-box"></div>
<div style="left:36.20px;top:181.20px;width:935.30px;height:11.78px;background:#cbccc7;border-bottom:1px solid #c3c4bf;border-left:0.8px solid #efefec;box-sizing:border-box"></div>
<svg style="position:absolute;left:38.10px;top:182.90px" width="8" height="8" viewBox="0 0 8 8"><circle cx="4" cy="4" r="3.5" fill="none" stroke="#666" stroke-width="0.8"/><path d="M2.6 3.2L4 4.6 5.4 3.2" stroke="#444" stroke-width="0.9" fill="none"/></svg>
<svg style="position:absolute;left:48.00px;top:183.20px" width="7.5" height="7.5" viewBox="0 0 7.5 7.5"><rect x="0.4" y="0.4" width="6.7" height="6.7" fill="#fff" stroke="#999" stroke-width="0.8"/></svg>
<div class="t" style="left:93.70px;width:30.00px;top:184.17px;font-size:7.0px;line-height:8.40px;text-align:center;font-weight:bold;color:#151515">1</div>
<div class="t" style="left:216.00px;top:184.17px;font-size:7.0px;line-height:8.40px;font-weight:bold;color:#151515">Účastník: DEMO - Kompletní stavby, a.s.</div>
<div class="t" style="right:198.40px;top:184.17px;font-size:7.0px;line-height:8.40px;text-align:right;font-weight:bold;color:#151515">2 352,00</div>
<div style="left:30.00px;top:192.98px;width:6.20px;height:11.78px;background:#f7f7f7;border-bottom:0.8px solid #e4e4e4;box-sizing:border-box"></div>
<div style="left:47.33px;top:192.98px;width:924.17px;height:11.78px;background:#dcddd8;border-bottom:1px solid #d2d3ce;border-left:0.8px solid #efefec;box-sizing:border-box"></div>
<svg style="position:absolute;left:49.23px;top:194.68px" width="8" height="8" viewBox="0 0 8 8"><circle cx="4" cy="4" r="3.5" fill="none" stroke="#666" stroke-width="0.8"/><path d="M2.8 2.8L5 5M5 3.2V5H3.2" stroke="#444" stroke-width="0.8" fill="none"/></svg>
<svg style="position:absolute;left:59.13px;top:194.98px" width="7.5" height="7.5" viewBox="0 0 7.5 7.5"><rect x="0.4" y="0.4" width="6.7" height="6.7" fill="#fff" stroke="#999" stroke-width="0.8"/></svg>
<div class="t" style="left:93.70px;width:30.00px;top:195.95px;font-size:7.0px;line-height:8.40px;text-align:center;font-weight:bold;color:#151515">1</div>
<div class="t" style="left:224.17px;top:195.95px;font-size:7.0px;line-height:8.40px;font-weight:bold;color:#151515">S: Stavba</div>
<div class="t" style="right:198.40px;top:195.95px;font-size:7.0px;line-height:8.40px;text-align:right;font-weight:bold;color:#151515">2 352,00</div>
<div style="left:30.00px;top:204.76px;width:6.20px;height:11.78px;background:#f7f7f7;border-bottom:0.8px solid #e4e4e4;box-sizing:border-box"></div>
<div style="left:58.46px;top:204.76px;width:913.04px;height:11.78px;background:#e5e6e1;border-bottom:1px solid #d9dad5;border-left:0.8px solid #efefec;box-sizing:border-box"></div>
<svg style="position:absolute;left:60.36px;top:206.46px" width="8" height="8" viewBox="0 0 8 8"><circle cx="4" cy="4" r="3.5" fill="none" stroke="#666" stroke-width="0.8"/><path d="M2.8 2.8L5 5M5 3.2V5H3.2" stroke="#444" stroke-width="0.8" fill="none"/></svg>
<svg style="position:absolute;left:70.26px;top:206.76px" width="7.5" height="7.5" viewBox="0 0 7.5 7.5"><rect x="0.4" y="0.4" width="6.7" height="6.7" fill="#fff" stroke="#999" stroke-width="0.8"/></svg>
<div class="t" style="left:93.70px;width:30.00px;top:207.73px;font-size:7.0px;line-height:8.40px;text-align:center;font-weight:bold;color:#151515">1</div>
<div class="t" style="left:232.34px;top:207.73px;font-size:7.0px;line-height:8.40px;font-weight:bold;color:#151515">SO 01: Stavební objekt 01</div>
<div class="t" style="right:198.40px;top:207.73px;font-size:7.0px;line-height:8.40px;text-align:right;font-weight:bold;color:#151515">2 352,00</div>
<div style="left:30.00px;top:216.54px;width:6.20px;height:11.78px;background:#f7f7f7;border-bottom:0.8px solid #e4e4e4;box-sizing:border-box"></div>
<div style="left:69.59px;top:216.54px;width:901.91px;height:11.78px;background:#ecede9;border-bottom:1px solid #dcdcd8;border-left:0.8px solid #efefec;box-sizing:border-box"></div>
<svg style="position:absolute;left:71.49px;top:218.24px" width="8" height="8" viewBox="0 0 8 8"><circle cx="4" cy="4" r="3.5" fill="none" stroke="#666" stroke-width="0.8"/><path d="M2.8 2.8L5 5M5 3.2V5H3.2" stroke="#444" stroke-width="0.8" fill="none"/></svg>
<svg style="position:absolute;left:81.39px;top:218.54px" width="7.5" height="7.5" viewBox="0 0 7.5 7.5"><rect x="0.4" y="0.4" width="6.7" height="6.7" fill="#fff" stroke="#999" stroke-width="0.8"/></svg>
<div class="t" style="left:93.70px;width:30.00px;top:219.51px;font-size:7.0px;line-height:8.40px;text-align:center;font-weight:bold;color:#151515">1</div>
<div class="t" style="left:240.51px;top:219.51px;font-size:7.0px;line-height:8.40px;font-weight:bold;color:#151515">781_00: Dokončovací práce - obklady</div>
<div class="t" style="right:198.40px;top:219.51px;font-size:7.0px;line-height:8.40px;text-align:right;font-weight:bold;color:#151515">2 352,00</div>
<div style="left:30.00px;top:228.32px;width:6.20px;height:11.78px;background:#f7f7f7;border-bottom:0.8px solid #e4e4e4;box-sizing:border-box"></div>
<div style="left:80.72px;top:228.32px;width:890.78px;height:11.78px;background:#fff;border-bottom:1px solid #e2e2e2;border-left:0.8px solid #e8e8e8;box-sizing:border-box"></div>
<svg style="position:absolute;left:83.80px;top:230.22px" width="7.5" height="7.5" viewBox="0 0 7.5 7.5"><rect x="0.4" y="0.4" width="6.7" height="6.7" fill="#fff" stroke="#aaa" stroke-width="0.8"/></svg>
<div class="t" style="left:94.50px;width:30.00px;top:231.29px;font-size:7.0px;line-height:8.40px;text-align:center;color:#2a2a2a">421</div>
<div class="t" style="left:128.00px;top:231.29px;font-size:7.0px;line-height:8.40px;color:#2a2a2a">781495141</div>
<div class="t" style="left:217.50px;top:231.29px;font-size:7.0px;line-height:8.40px;color:#2a2a2a">Průnik obkladem kruhový do DN 30</div>
<div class="t" style="left:467.50px;width:30.00px;top:231.29px;font-size:7.0px;line-height:8.40px;text-align:center;color:#2a2a2a">kus</div>
<div class="t" style="right:441.70px;top:231.29px;font-size:7.0px;line-height:8.40px;text-align:right;color:#2a2a2a">30,09</div>
<div class="t" style="right:368.80px;top:231.29px;font-size:7.0px;line-height:8.40px;text-align:right;color:#2a2a2a">3 370</div>
<div class="t" style="right:312.70px;top:231.29px;font-size:7.0px;line-height:8.40px;text-align:right;color:#2a2a2a">112,000</div>
<div class="t" style="right:252.80px;top:231.29px;font-size:7.0px;line-height:8.40px;text-align:right;color:#2a2a2a">21,00</div>
<div class="t" style="right:198.20px;top:231.29px;font-size:7.0px;line-height:8.40px;text-align:right;color:#2a2a2a">2 352,00</div>
<div class="t" style="right:151.20px;top:231.29px;font-size:7.0px;line-height:8.40px;text-align:right;color:#2a2a2a">- 30,21</div>
<div class="t" style="right:109.80px;top:231.29px;font-size:7.0px;line-height:8.40px;text-align:right;color:#2a2a2a">-</div>
<svg style="position:absolute;left:923.80px;top:230.42px" width="7.8" height="7.8" viewBox="0 0 7.8 7.8"><path d="M1.5 1.5l4.8 4.8M6.3 1.5l-4.8 4.8" stroke="#a4a4a4" stroke-width="2.5" stroke-linecap="square"/><circle cx="3.9" cy="3.9" r="1.3" fill="#a4a4a4"/></svg>
<svg style="position:absolute;left:951.80px;top:230.42px" width="7.8" height="7.8" viewBox="0 0 7.8 7.8"><path d="M1.5 1.5l4.8 4.8M6.3 1.5l-4.8 4.8" stroke="#a4a4a4" stroke-width="2.5" stroke-linecap="square"/><circle cx="3.9" cy="3.9" r="1.3" fill="#a4a4a4"/></svg>
<div style="left:30.00px;top:240.10px;width:6.20px;height:11.78px;background:#f7f7f7;border-bottom:0.8px solid #e4e4e4;box-sizing:border-box"></div>
<div style="left:36.20px;top:240.10px;width:935.30px;height:11.78px;background:#cbccc7;border-bottom:1px solid #c3c4bf;border-left:0.8px solid #efefec;box-sizing:border-box"></div>
<svg style="position:absolute;left:38.10px;top:241.80px" width="8" height="8" viewBox="0 0 8 8"><circle cx="4" cy="4" r="3.5" fill="none" stroke="#666" stroke-width="0.8"/><path d="M2.6 3.2L4 4.6 5.4 3.2" stroke="#444" stroke-width="0.9" fill="none"/></svg>
<svg style="position:absolute;left:48.00px;top:242.10px" width="7.5" height="7.5" viewBox="0 0 7.5 7.5"><rect x="0.4" y="0.4" width="6.7" height="6.7" fill="#fff" stroke="#999" stroke-width="0.8"/></svg>
<div class="t" style="left:93.70px;width:30.00px;top:243.07px;font-size:7.0px;line-height:8.40px;text-align:center;font-weight:bold;color:#151515">5</div>
<div class="t" style="left:216.00px;top:243.07px;font-size:7.0px;line-height:8.40px;font-weight:bold;color:#151515">Účastník: DEMO - ZP STAV s.r.o.</div>
<div class="t" style="right:198.40px;top:243.07px;font-size:7.0px;line-height:8.40px;text-align:right;font-weight:bold;color:#151515">61 610,78</div>
<div style="left:30.00px;top:251.88px;width:6.20px;height:11.78px;background:#f7f7f7;border-bottom:0.8px solid #e4e4e4;box-sizing:border-box"></div>
<div style="left:47.33px;top:251.88px;width:924.17px;height:11.78px;background:#dcddd8;border-bottom:1px solid #d2d3ce;border-left:0.8px solid #efefec;box-sizing:border-box"></div>
<svg style="position:absolute;left:49.23px;top:253.58px" width="8" height="8" viewBox="0 0 8 8"><circle cx="4" cy="4" r="3.5" fill="none" stroke="#666" stroke-width="0.8"/><path d="M2.8 2.8L5 5M5 3.2V5H3.2" stroke="#444" stroke-width="0.8" fill="none"/></svg>
<svg style="position:absolute;left:59.13px;top:253.88px" width="7.5" height="7.5" viewBox="0 0 7.5 7.5"><rect x="0.4" y="0.4" width="6.7" height="6.7" fill="#fff" stroke="#999" stroke-width="0.8"/></svg>
<div class="t" style="left:93.70px;width:30.00px;top:254.85px;font-size:7.0px;line-height:8.40px;text-align:center;font-weight:bold;color:#151515">5</div>
<div class="t" style="left:224.17px;top:254.85px;font-size:7.0px;line-height:8.40px;font-weight:bold;color:#151515">S: Stavba</div>
<div class="t" style="right:198.40px;top:254.85px;font-size:7.0px;line-height:8.40px;text-align:right;font-weight:bold;color:#151515">61 610,78</div>
<div style="left:30.00px;top:263.66px;width:6.20px;height:11.78px;background:#f7f7f7;border-bottom:0.8px solid #e4e4e4;box-sizing:border-box"></div>
<div style="left:58.46px;top:263.66px;width:913.04px;height:11.78px;background:#e5e6e1;border-bottom:1px solid #d9dad5;border-left:0.8px solid #efefec;box-sizing:border-box"></div>
<svg style="position:absolute;left:60.36px;top:265.36px" width="8" height="8" viewBox="0 0 8 8"><circle cx="4" cy="4" r="3.5" fill="none" stroke="#666" stroke-width="0.8"/><path d="M2.8 2.8L5 5M5 3.2V5H3.2" stroke="#444" stroke-width="0.8" fill="none"/></svg>
<svg style="position:absolute;left:70.26px;top:265.66px" width="7.5" height="7.5" viewBox="0 0 7.5 7.5"><rect x="0.4" y="0.4" width="6.7" height="6.7" fill="#fff" stroke="#999" stroke-width="0.8"/></svg>
<div class="t" style="left:93.70px;width:30.00px;top:266.63px;font-size:7.0px;line-height:8.40px;text-align:center;font-weight:bold;color:#151515">5</div>
<div class="t" style="left:232.34px;top:266.63px;font-size:7.0px;line-height:8.40px;font-weight:bold;color:#151515">SO 01: Stavební objekt 01</div>
<div class="t" style="right:198.40px;top:266.63px;font-size:7.0px;line-height:8.40px;text-align:right;font-weight:bold;color:#151515">61 610,78</div>
<div style="left:30.00px;top:275.44px;width:6.20px;height:11.78px;background:#f7f7f7;border-bottom:0.8px solid #e4e4e4;box-sizing:border-box"></div>
<div style="left:69.59px;top:275.44px;width:901.91px;height:11.78px;background:#ecede9;border-bottom:1px solid #dcdcd8;border-left:0.8px solid #efefec;box-sizing:border-box"></div>
<svg style="position:absolute;left:71.49px;top:277.14px" width="8" height="8" viewBox="0 0 8 8"><circle cx="4" cy="4" r="3.5" fill="none" stroke="#666" stroke-width="0.8"/><path d="M2.8 2.8L5 5M5 3.2V5H3.2" stroke="#444" stroke-width="0.8" fill="none"/></svg>
<svg style="position:absolute;left:81.39px;top:277.44px" width="7.5" height="7.5" viewBox="0 0 7.5 7.5"><rect x="0.4" y="0.4" width="6.7" height="6.7" fill="#fff" stroke="#999" stroke-width="0.8"/></svg>
<div class="t" style="left:93.70px;width:30.00px;top:278.41px;font-size:7.0px;line-height:8.40px;text-align:center;font-weight:bold;color:#151515">2</div>
<div class="t" style="left:240.51px;top:278.41px;font-size:7.0px;line-height:8.40px;font-weight:bold;color:#151515">006: Úpravy povrchů, podlahy a osazovaní výplní</div>
<div class="t" style="right:198.40px;top:278.41px;font-size:7.0px;line-height:8.40px;text-align:right;font-weight:bold;color:#151515">435,94</div>
<div style="left:30.00px;top:287.22px;width:6.20px;height:11.78px;background:#f7f7f7;border-bottom:0.8px solid #e4e4e4;box-sizing:border-box"></div>
<div style="left:80.72px;top:287.22px;width:890.78px;height:11.78px;background:#fff;border-bottom:1px solid #e2e2e2;border-left:0.8px solid #e8e8e8;box-sizing:border-box"></div>
<svg style="position:absolute;left:83.80px;top:289.12px" width="7.5" height="7.5" viewBox="0 0 7.5 7.5"><rect x="0.4" y="0.4" width="6.7" height="6.7" fill="#fff" stroke="#aaa" stroke-width="0.8"/></svg>
<div class="t" style="left:94.50px;width:30.00px;top:290.19px;font-size:7.0px;line-height:8.40px;text-align:center;color:#2a2a2a">120</div>
<div class="t" style="left:128.00px;top:290.19px;font-size:7.0px;line-height:8.40px;color:#2a2a2a">59051486</div>
<div class="t" style="left:217.50px;top:290.19px;font-size:7.0px;line-height:8.40px;color:#2a2a2a">profil rohový PVC 15x15mm s výztužnou tkaninou š 100mm pro ETICS</div>
<div class="t" style="left:467.50px;width:30.00px;top:290.19px;font-size:7.0px;line-height:8.40px;text-align:center;color:#2a2a2a">m</div>
<div class="t" style="right:441.70px;top:290.19px;font-size:7.0px;line-height:8.40px;text-align:right;color:#2a2a2a">10,50</div>
<div class="t" style="right:368.80px;top:290.19px;font-size:7.0px;line-height:8.40px;text-align:right;color:#2a2a2a">1 906</div>
<div class="t" style="right:312.70px;top:290.19px;font-size:7.0px;line-height:8.40px;text-align:right;color:#2a2a2a">181,493</div>
<div class="t" style="right:252.80px;top:290.19px;font-size:7.0px;line-height:8.40px;text-align:right;color:#2a2a2a">1,30</div>
<div class="t" style="right:198.20px;top:290.19px;font-size:7.0px;line-height:8.40px;text-align:right;color:#2a2a2a">235,94</div>
<div class="t" style="right:151.20px;top:290.19px;font-size:7.0px;line-height:8.40px;text-align:right;color:#2a2a2a">- 87,62</div>
<div class="t" style="right:109.80px;top:290.19px;font-size:7.0px;line-height:8.40px;text-align:right;color:#2a2a2a">-</div>
<svg style="position:absolute;left:923.80px;top:289.32px" width="7.8" height="7.8" viewBox="0 0 7.8 7.8"><path d="M1.5 1.5l4.8 4.8M6.3 1.5l-4.8 4.8" stroke="#a4a4a4" stroke-width="2.5" stroke-linecap="square"/><circle cx="3.9" cy="3.9" r="1.3" fill="#a4a4a4"/></svg>
<svg style="position:absolute;left:951.80px;top:289.32px" width="7.8" height="7.8" viewBox="0 0 7.8 7.8"><path d="M1.5 1.5l4.8 4.8M6.3 1.5l-4.8 4.8" stroke="#a4a4a4" stroke-width="2.5" stroke-linecap="square"/><circle cx="3.9" cy="3.9" r="1.3" fill="#a4a4a4"/></svg>
<div style="left:30.00px;top:299.00px;width:6.20px;height:11.78px;background:#f7f7f7;border-bottom:0.8px solid #e4e4e4;box-sizing:border-box"></div>
<div style="left:80.72px;top:299.00px;width:890.78px;height:11.78px;background:#fff;border-bottom:1px solid #e2e2e2;border-left:0.8px solid #e8e8e8;box-sizing:border-box"></div>
<svg style="position:absolute;left:83.80px;top:300.90px" width="7.5" height="7.5" viewBox="0 0 7.5 7.5"><rect x="0.4" y="0.4" width="6.7" height="6.7" fill="#fff" stroke="#aaa" stroke-width="0.8"/></svg>
<div class="t" style="left:94.50px;width:30.00px;top:301.97px;font-size:7.0px;line-height:8.40px;text-align:center;color:#2a2a2a">141</div>
<div class="t" style="left:128.00px;top:301.97px;font-size:7.0px;line-height:8.40px;color:#2a2a2a">55331486</div>
<div class="t" style="left:217.50px;top:301.97px;font-size:7.0px;line-height:8.40px;color:#2a2a2a">zárubeň jednokřídlá ocelová pro zdění tl stěny 110-150mm rozměru 700/197...</div>
<div class="t" style="left:467.50px;width:30.00px;top:301.97px;font-size:7.0px;line-height:8.40px;text-align:center;color:#2a2a2a">kus</div>
<div class="t" style="right:441.70px;top:301.97px;font-size:7.0px;line-height:8.40px;text-align:right;color:#2a2a2a">2 050,00</div>
<div class="t" style="right:368.80px;top:301.97px;font-size:7.0px;line-height:8.40px;text-align:right;color:#2a2a2a">2 050</div>
<div class="t" style="right:319.00px;top:301.97px;font-size:7.0px;line-height:8.40px;text-align:right;color:#2a2a2a">1,000</div>
<svg style="position:absolute;left:707.20px;top:301.60px" width="3.4" height="5.4" viewBox="0 0 3.4 5.4"><rect x="0" y="1.2" width="3.4" height="4.2" fill="#9a9a9a"/><rect x="0" y="0" width="3.4" height="1.3" fill="#76c85a"/><path d="M0.8 2.2v2.6" stroke="#c4c4c4" stroke-width="0.6"/></svg>
<div class="t" style="right:259.40px;top:301.97px;font-size:7.0px;line-height:8.40px;text-align:right;color:#2a2a2a">200,00</div>
<svg style="position:absolute;left:767.40px;top:301.60px" width="3.4" height="5.4" viewBox="0 0 3.4 5.4"><rect x="0" y="1.2" width="3.4" height="4.2" fill="#9a9a9a"/><rect x="0" y="0" width="3.4" height="1.3" fill="#76c85a"/><path d="M0.8 2.2v2.6" stroke="#c4c4c4" stroke-width="0.6"/></svg>
<div class="t" style="right:198.20px;top:301.97px;font-size:7.0px;line-height:8.40px;text-align:right;color:#2a2a2a">200,00</div>
<div class="t" style="right:151.20px;top:301.97px;font-size:7.0px;line-height:8.40px;text-align:right;color:#2a2a2a">- 90,24</div>
<div class="t" style="right:109.80px;top:301.97px;font-size:7.0px;line-height:8.40px;text-align:right;color:#2a2a2a">-</div>
<svg style="position:absolute;left:923.80px;top:301.10px" width="7.8" height="7.8" viewBox="0 0 7.8 7.8"><path d="M1.5 1.5l4.8 4.8M6.3 1.5l-4.8 4.8" stroke="#a4a4a4" stroke-width="2.5" stroke-linecap="square"/><circle cx="3.9" cy="3.9" r="1.3" fill="#a4a4a4"/></svg>
<svg style="position:absolute;left:951.80px;top:301.10px" width="7.8" height="7.8" viewBox="0 0 7.8 7.8"><path d="M1.5 1.5l4.8 4.8M6.3 1.5l-4.8 4.8" stroke="#a4a4a4" stroke-width="2.5" stroke-linecap="square"/><circle cx="3.9" cy="3.9" r="1.3" fill="#a4a4a4"/></svg>
<div style="left:81.20px;top:298.80px;width:890.30px;height:11.78px;border:1px solid #8c8c8c;box-sizing:border-box"></div>
<svg style="position:absolute;left:31.50px;top:302.40px" width="3" height="5" viewBox="0 0 3 5"><path d="M0 0l3 2.5L0 5z" fill="#666"/></svg>
<div style="left:30.00px;top:310.78px;width:6.20px;height:11.78px;background:#f7f7f7;border-bottom:0.8px solid #e4e4e4;box-sizing:border-box"></div>
<div style="left:69.59px;top:310.78px;width:901.91px;height:11.78px;background:#ecede9;border-bottom:1px solid #dcdcd8;border-left:0.8px solid #efefec;box-sizing:border-box"></div>
<svg style="position:absolute;left:71.49px;top:312.48px" width="8" height="8" viewBox="0 0 8 8"><circle cx="4" cy="4" r="3.5" fill="none" stroke="#666" stroke-width="0.8"/><path d="M2.8 2.8L5 5M5 3.2V5H3.2" stroke="#444" stroke-width="0.8" fill="none"/></svg>
<svg style="position:absolute;left:81.39px;top:312.78px" width="7.5" height="7.5" viewBox="0 0 7.5 7.5"><rect x="0.4" y="0.4" width="6.7" height="6.7" fill="#fff" stroke="#999" stroke-width="0.8"/></svg>
<div class="t" style="left:93.70px;width:30.00px;top:313.75px;font-size:7.0px;line-height:8.40px;text-align:center;font-weight:bold;color:#151515">2</div>
<div class="t" style="left:240.51px;top:313.75px;font-size:7.0px;line-height:8.40px;font-weight:bold;color:#151515">784_00: Dokončovací práce - malby a tapety</div>
<div class="t" style="right:198.40px;top:313.75px;font-size:7.0px;line-height:8.40px;text-align:right;font-weight:bold;color:#151515">59 874,84</div>
<div style="left:30.00px;top:322.56px;width:6.20px;height:11.78px;background:#f7f7f7;border-bottom:0.8px solid #e4e4e4;box-sizing:border-box"></div>
<div style="left:80.72px;top:322.56px;width:890.78px;height:11.78px;background:#fff;border-bottom:1px solid #e2e2e2;border-left:0.8px solid #e8e8e8;box-sizing:border-box"></div>
<svg style="position:absolute;left:83.80px;top:324.46px" width="7.5" height="7.5" viewBox="0 0 7.5 7.5"><rect x="0.4" y="0.4" width="6.7" height="6.7" fill="#fff" stroke="#aaa" stroke-width="0.8"/></svg>
<div class="t" style="left:94.50px;width:30.00px;top:325.53px;font-size:7.0px;line-height:8.40px;text-align:center;color:#2a2a2a">443</div>
<div class="t" style="left:128.00px;top:325.53px;font-size:7.0px;line-height:8.40px;color:#2a2a2a">784221101</div>
<div class="t" style="left:217.50px;top:325.53px;font-size:7.0px;line-height:8.40px;color:#2a2a2a">Dvojnásobné bílé malby ze směsí za sucha dobře otěruvzdorných v místnost...</div>
<div class="t" style="left:467.50px;width:30.00px;top:325.53px;font-size:7.0px;line-height:8.40px;text-align:center;color:#2a2a2a">m2</div>
<div class="t" style="right:441.70px;top:325.53px;font-size:7.0px;line-height:8.40px;text-align:right;color:#2a2a2a">25,03</div>
<div class="t" style="right:368.80px;top:325.53px;font-size:7.0px;line-height:8.40px;text-align:right;color:#2a2a2a">85 608</div>
<div class="t" style="right:312.70px;top:325.53px;font-size:7.0px;line-height:8.40px;text-align:right;color:#2a2a2a">3 419,614</div>
<div class="t" style="right:252.80px;top:325.53px;font-size:7.0px;line-height:8.40px;text-align:right;color:#2a2a2a">16,00</div>
<div class="t" style="right:198.20px;top:325.53px;font-size:7.0px;line-height:8.40px;text-align:right;color:#2a2a2a">54 713,82</div>
<div class="t" style="right:151.20px;top:325.53px;font-size:7.0px;line-height:8.40px;text-align:right;color:#2a2a2a">- 36,09</div>
<div class="t" style="right:109.80px;top:325.53px;font-size:7.0px;line-height:8.40px;text-align:right;color:#2a2a2a">-</div>
<svg style="position:absolute;left:923.80px;top:324.66px" width="7.8" height="7.8" viewBox="0 0 7.8 7.8"><path d="M1.5 1.5l4.8 4.8M6.3 1.5l-4.8 4.8" stroke="#a4a4a4" stroke-width="2.5" stroke-linecap="square"/><circle cx="3.9" cy="3.9" r="1.3" fill="#a4a4a4"/></svg>
<svg style="position:absolute;left:951.80px;top:324.66px" width="7.8" height="7.8" viewBox="0 0 7.8 7.8"><path d="M1.5 1.5l4.8 4.8M6.3 1.5l-4.8 4.8" stroke="#a4a4a4" stroke-width="2.5" stroke-linecap="square"/><circle cx="3.9" cy="3.9" r="1.3" fill="#a4a4a4"/></svg>
<div style="left:30.00px;top:334.34px;width:6.20px;height:11.78px;background:#f7f7f7;border-bottom:0.8px solid #e4e4e4;box-sizing:border-box"></div>
<div style="left:80.72px;top:334.34px;width:890.78px;height:11.78px;background:#fff;border-bottom:1px solid #e2e2e2;border-left:0.8px solid #e8e8e8;box-sizing:border-box"></div>
<svg style="position:absolute;left:83.80px;top:336.24px" width="7.5" height="7.5" viewBox="0 0 7.5 7.5"><rect x="0.4" y="0.4" width="6.7" height="6.7" fill="#fff" stroke="#aaa" stroke-width="0.8"/></svg>
<div class="t" style="left:94.50px;width:30.00px;top:337.31px;font-size:7.0px;line-height:8.40px;text-align:center;color:#2a2a2a">444</div>
<div class="t" style="left:128.00px;top:337.31px;font-size:7.0px;line-height:8.40px;color:#2a2a2a">784221107</div>
<div class="t" style="left:217.50px;top:337.31px;font-size:7.0px;line-height:8.40px;color:#2a2a2a">Dvojnásobné bílé malby ze směsí za sucha dobře otěruvzdorných na schodiš...</div>
<div class="t" style="left:467.50px;width:30.00px;top:337.31px;font-size:7.0px;line-height:8.40px;text-align:center;color:#2a2a2a">m2</div>
<div class="t" style="right:441.70px;top:337.31px;font-size:7.0px;line-height:8.40px;text-align:right;color:#2a2a2a">26,36</div>
<div class="t" style="right:368.80px;top:337.31px;font-size:7.0px;line-height:8.40px;text-align:right;color:#2a2a2a">9 717</div>
<div class="t" style="right:312.70px;top:337.31px;font-size:7.0px;line-height:8.40px;text-align:right;color:#2a2a2a">368,644</div>
<div class="t" style="right:252.80px;top:337.31px;font-size:7.0px;line-height:8.40px;text-align:right;color:#2a2a2a">14,00</div>
<div class="t" style="right:198.20px;top:337.31px;font-size:7.0px;line-height:8.40px;text-align:right;color:#2a2a2a">5 161,02</div>
<div class="t" style="right:151.20px;top:337.31px;font-size:7.0px;line-height:8.40px;text-align:right;color:#2a2a2a">- 46,89</div>
<div class="t" style="right:109.80px;top:337.31px;font-size:7.0px;line-height:8.40px;text-align:right;color:#2a2a2a">-</div>
<svg style="position:absolute;left:923.80px;top:336.44px" width="7.8" height="7.8" viewBox="0 0 7.8 7.8"><path d="M1.5 1.5l4.8 4.8M6.3 1.5l-4.8 4.8" stroke="#a4a4a4" stroke-width="2.5" stroke-linecap="square"/><circle cx="3.9" cy="3.9" r="1.3" fill="#a4a4a4"/></svg>
<svg style="position:absolute;left:951.80px;top:336.44px" width="7.8" height="7.8" viewBox="0 0 7.8 7.8"><path d="M1.5 1.5l4.8 4.8M6.3 1.5l-4.8 4.8" stroke="#a4a4a4" stroke-width="2.5" stroke-linecap="square"/><circle cx="3.9" cy="3.9" r="1.3" fill="#a4a4a4"/></svg>
<div style="left:30.00px;top:346.12px;width:6.20px;height:11.78px;background:#f7f7f7;border-bottom:0.8px solid #e4e4e4;box-sizing:border-box"></div>
<div style="left:69.59px;top:346.12px;width:901.91px;height:11.78px;background:#ecede9;border-bottom:1px solid #dcdcd8;border-left:0.8px solid #efefec;box-sizing:border-box"></div>
<svg style="position:absolute;left:71.49px;top:347.82px" width="8" height="8" viewBox="0 0 8 8"><circle cx="4" cy="4" r="3.5" fill="none" stroke="#666" stroke-width="0.8"/><path d="M2.8 2.8L5 5M5 3.2V5H3.2" stroke="#444" stroke-width="0.8" fill="none"/></svg>
<svg style="position:absolute;left:81.39px;top:348.12px" width="7.5" height="7.5" viewBox="0 0 7.5 7.5"><rect x="0.4" y="0.4" width="6.7" height="6.7" fill="#fff" stroke="#999" stroke-width="0.8"/></svg>
<div class="t" style="left:93.70px;width:30.00px;top:349.09px;font-size:7.0px;line-height:8.40px;text-align:center;font-weight:bold;color:#151515">1</div>
<div class="t" style="left:240.51px;top:349.09px;font-size:7.0px;line-height:8.40px;font-weight:bold;color:#151515">VRN3: Zařízení staveniště</div>
<div class="t" style="right:198.40px;top:349.09px;font-size:7.0px;line-height:8.40px;text-align:right;font-weight:bold;color:#151515">1 300,00</div>
<div style="left:30.00px;top:357.90px;width:6.20px;height:11.78px;background:#f7f7f7;border-bottom:0.8px solid #e4e4e4;box-sizing:border-box"></div>
<div style="left:80.72px;top:357.90px;width:890.78px;height:11.78px;background:#fff;border-bottom:1px solid #e2e2e2;border-left:0.8px solid #e8e8e8;box-sizing:border-box"></div>
<svg style="position:absolute;left:83.80px;top:359.80px" width="7.5" height="7.5" viewBox="0 0 7.5 7.5"><rect x="0.4" y="0.4" width="6.7" height="6.7" fill="#fff" stroke="#aaa" stroke-width="0.8"/></svg>
<div class="t" style="left:94.50px;width:30.00px;top:360.87px;font-size:7.0px;line-height:8.40px;text-align:center;color:#2a2a2a">458</div>
<div class="t" style="left:128.00px;top:360.87px;font-size:7.0px;line-height:8.40px;color:#2a2a2a">034503000</div>
<div class="t" style="left:217.50px;top:360.87px;font-size:7.0px;line-height:8.40px;color:#2a2a2a">Informační tabule na staveništi</div>
<div class="t" style="left:467.50px;width:30.00px;top:360.87px;font-size:7.0px;line-height:8.40px;text-align:center;color:#2a2a2a">kus</div>
<div class="t" style="right:441.70px;top:360.87px;font-size:7.0px;line-height:8.40px;text-align:right;color:#2a2a2a">2 000,00</div>
<div class="t" style="right:368.80px;top:360.87px;font-size:7.0px;line-height:8.40px;text-align:right;color:#2a2a2a">2 000</div>
<div class="t" style="right:312.70px;top:360.87px;font-size:7.0px;line-height:8.40px;text-align:right;color:#2a2a2a">1,000</div>
<div class="t" style="right:252.80px;top:360.87px;font-size:7.0px;line-height:8.40px;text-align:right;color:#2a2a2a">1 300,00</div>
<div class="t" style="right:198.20px;top:360.87px;font-size:7.0px;line-height:8.40px;text-align:right;color:#2a2a2a">1 300,00</div>
<div class="t" style="right:151.20px;top:360.87px;font-size:7.0px;line-height:8.40px;text-align:right;color:#2a2a2a">- 35,00</div>
<div class="t" style="right:109.80px;top:360.87px;font-size:7.0px;line-height:8.40px;text-align:right;color:#2a2a2a">-</div>
<svg style="position:absolute;left:923.80px;top:360.00px" width="7.8" height="7.8" viewBox="0 0 7.8 7.8"><path d="M1.5 1.5l4.8 4.8M6.3 1.5l-4.8 4.8" stroke="#a4a4a4" stroke-width="2.5" stroke-linecap="square"/><circle cx="3.9" cy="3.9" r="1.3" fill="#a4a4a4"/></svg>
<svg style="position:absolute;left:951.80px;top:360.00px" width="7.8" height="7.8" viewBox="0 0 7.8 7.8"><path d="M1.5 1.5l4.8 4.8M6.3 1.5l-4.8 4.8" stroke="#a4a4a4" stroke-width="2.5" stroke-linecap="square"/><circle cx="3.9" cy="3.9" r="1.3" fill="#a4a4a4"/></svg>
<div style="left:30.00px;top:368.68px;width:941.50px;height:1.00px;background:#dcdcdc"></div>
<div style="left:26.50px;top:123.30px;width:179.50px;height:27.70px;border:4px solid rgba(232,64,72,0.62);border-top-width:4.3px;box-sizing:border-box"></div>
<div style="left:206.00px;top:123.30px;width:622.50px;height:4.30px;background:rgba(232,64,72,0.62)"></div>
<div style="left:824.50px;top:127.60px;width:4.00px;height:10.00px;background:rgba(232,64,72,0.62)"></div>
<svg style="position:absolute;left:816.20px;top:137.50px" width="20.2" height="19" viewBox="0 0 20.2 19"><path d="M0 0H20.2L10.1 19z" fill="rgba(232,64,72,0.62)"/></svg>
<div style="left:825.00px;top:155.00px;width:53.00px;height:217.00px;border:4px solid rgba(232,64,72,0.62);box-sizing:border-box"></div>
</body></html>
